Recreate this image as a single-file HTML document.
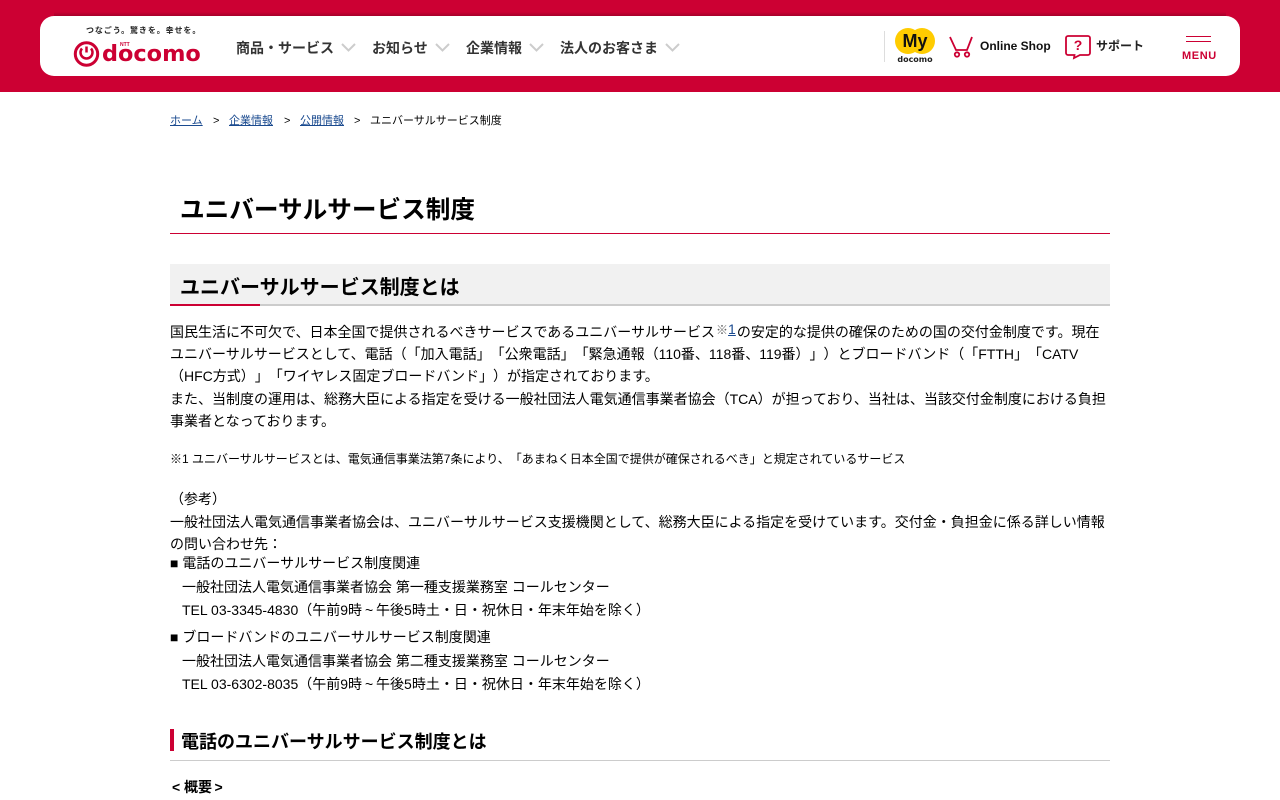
<!DOCTYPE html>
<html lang="ja"><head><meta charset="utf-8"><title>ユニバーサルサービス制度</title>
<style>
html,body{margin:0;padding:0;background:#fff;width:1280px;height:800px;overflow:hidden}
body{font-family:"Liberation Sans","Noto Sans CJK JP",sans-serif;color:#000;position:relative;text-spacing-trim:space-all}
.t{position:absolute;white-space:nowrap;font-size:14px;line-height:22px}
a{color:#1a4a8f;text-decoration:underline}
.b{font-weight:bold}
.n{position:absolute;top:38px;font-size:14px;line-height:20px;font-weight:bold;color:#333;white-space:nowrap}
svg{position:absolute;overflow:visible}
sup{font-size:12px;line-height:0;vertical-align:3px;color:#1a4a8f;margin:0 1px}
sup u{font-size:14px}
.w{display:inline-block;width:14px;text-align:center}
</style></head><body>
<div style="position:absolute;left:0;top:0;width:1280px;height:92px;background:#c03"></div>
<div style="position:absolute;left:54px;top:12px;width:1172px;height:4px;background:linear-gradient(#c03,#a5002a)"></div>
<div style="position:absolute;left:40px;top:16px;width:1200px;height:60px;background:#fff;border-radius:14px"></div>

<div class="t" style="left:86px;top:25px;font-size:8px;line-height:12px;letter-spacing:.9px;font-weight:bold;color:#222">つなごう。驚きを。幸せを。</div>
<svg style="left:73px;top:41px" width="28" height="26" viewBox="0 0 28 26"><circle cx="13.500" cy="13" r="11.200" fill="none" stroke="#c03" stroke-width="3"/><path d="M9 7.500a6 6 0 1 0 9 0" fill="none" stroke="#c03" stroke-width="2.500"/><path d="M13.500 5.500v6" fill="none" stroke="#c03" stroke-width="2.500"/></svg>
<div class="t" style="left:102px;top:40px;font-size:22.400px;line-height:28px;font-weight:bold;color:#c03;font-family:'DejaVu Sans',sans-serif">docomo</div>
<div class="t" style="left:120px;top:42px;font-size:5px;line-height:6px;font-weight:bold;color:#c03;background:#fff">NTT</div>

<div class="n" style="left:236px">商品・サービス</div>
<div class="n" style="left:372px">お知らせ</div>
<div class="n" style="left:466px">企業情報</div>
<div class="n" style="left:560px">法人のお客さま</div>
<svg style="left:341px;top:43px" width="15" height="9"><path d="M1 1l6.500 6.500L14 1" fill="none" stroke="#ccc" stroke-width="2"/></svg>
<svg style="left:435px;top:43px" width="15" height="9"><path d="M1 1l6.500 6.500L14 1" fill="none" stroke="#ccc" stroke-width="2"/></svg>
<svg style="left:529px;top:43px" width="15" height="9"><path d="M1 1l6.500 6.500L14 1" fill="none" stroke="#ccc" stroke-width="2"/></svg>
<svg style="left:665px;top:43px" width="15" height="9"><path d="M1 1l6.500 6.500L14 1" fill="none" stroke="#ccc" stroke-width="2"/></svg>

<div style="position:absolute;left:884px;top:31px;width:1px;height:31px;background:#ddd"></div>
<svg style="left:895px;top:28px" width="40" height="27"><circle cx="13" cy="13" r="13" fill="#fc0"/><circle cx="27" cy="13" r="13" fill="#fc0"/></svg>
<div class="t" style="left:895px;top:29px;width:40px;text-align:center;font-size:18px;line-height:24px;font-weight:bold;color:#111">My</div>
<div class="t" style="left:890px;top:54px;width:50px;text-align:center;font-size:8px;line-height:11px;font-weight:bold;color:#222;font-family:'DejaVu Sans',sans-serif">docomo</div>
<svg style="left:949px;top:36px" width="25" height="22" viewBox="0 0 25 22"><path d="M1 1l6 13h11l5-13" fill="none" stroke="#c03" stroke-width="1.800"/><circle cx="8" cy="18.500" r="2.200" fill="none" stroke="#c03" stroke-width="1.800"/><circle cx="18" cy="18.500" r="2.200" fill="none" stroke="#c03" stroke-width="1.800"/></svg>
<div class="t" style="left:980px;top:36px;font-size:12px;line-height:20px;font-weight:bold;color:#111">Online Shop</div>
<svg style="left:1065px;top:35px" width="26" height="25" viewBox="0 0 26 25"><path d="M3 1h20a2 2 0 0 1 2 2v15a2 2 0 0 1-2 2h-8l-6 3 .500-3H3a2 2 0 0 1-2-2V3a2 2 0 0 1 2-2z" fill="none" stroke="#c03" stroke-width="1.800"/></svg>
<div class="t" style="left:1065px;top:36px;width:26px;text-align:center;font-size:14px;line-height:19px;font-weight:bold;color:#c03">?</div>
<div class="t" style="left:1096px;top:36px;font-size:12px;line-height:20px;font-weight:bold;color:#222">サポート</div>
<div style="position:absolute;left:1186px;top:36px;width:25px;height:1px;background:#c03"></div>
<div style="position:absolute;left:1186px;top:41px;width:25px;height:1px;background:#c03"></div>
<div class="t" style="left:1182px;top:49px;font-size:11px;line-height:14px;font-weight:bold;color:#c03;letter-spacing:.6px">MENU</div>

<div class="t" style="left:170px;top:111px;font-size:11px;line-height:20px"><a>ホーム</a></div>
<div class="t" style="left:213px;top:111px;font-size:11px;line-height:20px">&gt;</div>
<div class="t" style="left:229px;top:111px;font-size:11px;line-height:20px"><a>企業情報</a></div>
<div class="t" style="left:284px;top:111px;font-size:11px;line-height:20px">&gt;</div>
<div class="t" style="left:300px;top:111px;font-size:11px;line-height:20px"><a>公開情報</a></div>
<div class="t" style="left:354px;top:111px;font-size:11px;line-height:20px">&gt;</div>
<div class="t" style="left:370px;top:111px;font-size:11px;line-height:20px">ユニバーサルサービス制度</div>

<div class="t b" style="left:180px;top:194px;font-size:24.640px;line-height:34px">ユニバーサルサービス制度</div>
<div style="position:absolute;left:170px;top:233px;width:940px;height:1px;background:#c03"></div>

<div style="position:absolute;left:170px;top:264px;width:940px;height:40px;background:#f1f1f1"></div>
<div style="position:absolute;left:170px;top:304px;width:940px;height:2px;background:#ccc"></div>
<div style="position:absolute;left:170px;top:304px;width:90px;height:2px;background:#c03"></div>
<div class="t b" style="left:180px;top:273px;font-size:20px;line-height:30px">ユニバーサルサービス制度とは</div>

<div class="t" style="left:170px;top:321px">国民生活に不可欠で、日本全国で提供されるべきサービスであるユニバーサルサービス<sup><span style="color:#666">※</span><u>1</u></sup>の安定的な提供の確保のための国の交付金制度です。現在</div>
<div class="t" style="left:170px;top:343px">ユニバーサルサービスとして、電話（「加入電話」「公衆電話」「緊急通報（110番、118番、119番）」）とブロードバンド（「FTTH」「CATV</div>
<div class="t" style="left:170px;top:365px">（HFC方式）」「ワイヤレス固定ブロードバンド」）が指定されております。</div>
<div class="t" style="left:170px;top:388px">また、当制度の運用は、総務大臣による指定を受ける一般社団法人電気通信事業者協会（TCA）が担っており、当社は、当該交付金制度における負担</div>
<div class="t" style="left:170px;top:410px">事業者となっております。</div>
<div class="t" style="left:170px;top:448px;font-size:12px">※1 ユニバーサルサービスとは、電気通信事業法第7条により、「あまねく日本全国で提供が確保されるべき」と規定されているサービス</div>
<div class="t" style="left:170px;top:488px">（参考）</div>
<div class="t" style="left:170px;top:511px">一般社団法人電気通信事業者協会は、ユニバーサルサービス支援機関として、総務大臣による指定を受けています。交付金・負担金に係る詳しい情報</div>
<div class="t" style="left:170px;top:533px">の問い合わせ先：</div>
<div class="t" style="left:170px;top:552px">■ 電話のユニバーサルサービス制度関連</div>
<div class="t" style="left:182px;top:576px">一般社団法人電気通信事業者協会 第一種支援業務室 コールセンター</div>
<div class="t" style="left:182px;top:599px">TEL 03-3345-4830（午前9時<span class="w">~</span>午後5時土・日・祝休日・年末年始を除く）</div>
<div class="t" style="left:170px;top:626px">■ ブロードバンドのユニバーサルサービス制度関連</div>
<div class="t" style="left:182px;top:650px">一般社団法人電気通信事業者協会 第二種支援業務室 コールセンター</div>
<div class="t" style="left:182px;top:673px">TEL 03-6302-8035（午前9時<span class="w">~</span>午後5時土・日・祝休日・年末年始を除く）</div>

<div style="position:absolute;left:170px;top:729px;width:4px;height:22px;background:#c03"></div>
<div class="t b" style="left:181px;top:729px;font-size:18px;line-height:26px">電話のユニバーサルサービス制度とは</div>
<div style="position:absolute;left:170px;top:760px;width:940px;height:1px;background:#ccc"></div>
<div class="t b" style="left:172px;top:776px">&lt;</div>
<div class="t b" style="left:184px;top:776px">概要</div>
<div class="t b" style="left:214.500px;top:776px">&gt;</div>
</body></html>
